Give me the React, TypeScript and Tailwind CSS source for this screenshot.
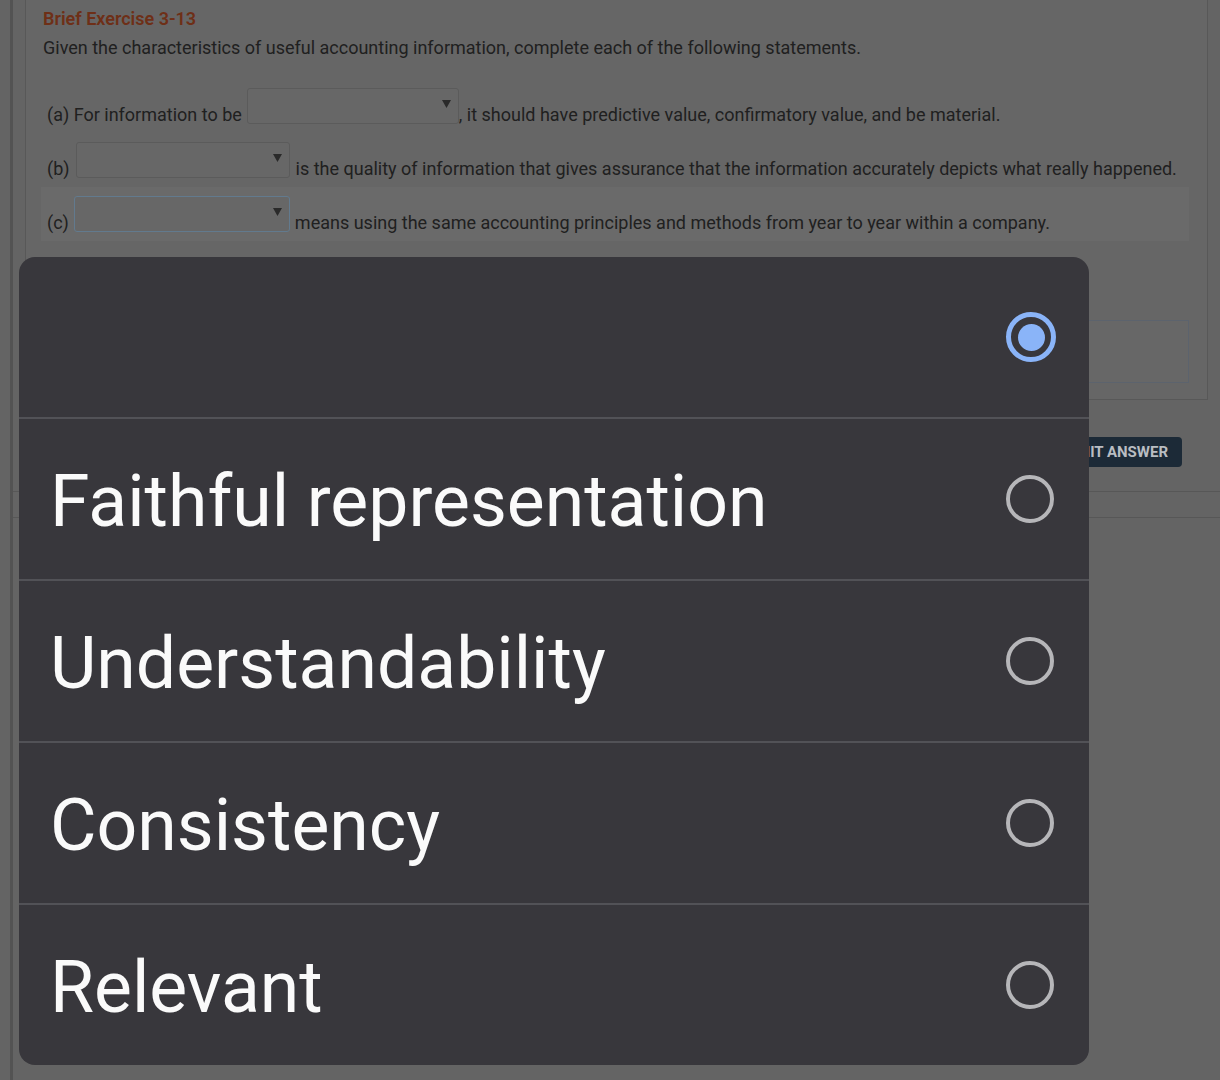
import React from "react";

const options = ["Faithful representation", "Understandability", "Consistency", "Relevant"];

function Dropdown({ className }: { className: string }) {
  return (
    <div className={`flex h-[36px] shrink-0 items-start justify-end rounded-[3px] border bg-[#676767] pr-[7px] pt-[11px] ${className}`}>
      <svg width="9" height="8" viewBox="0 0 9 8">
        <path d="M0 0 H9 L4.5 8 Z" fill="#2a2a2a" />
      </svg>
    </div>
  );
}

function Radio({ checked }: { checked?: boolean }) {
  if (checked) {
    return (
      <span className="flex h-[50px] w-[50px] shrink-0 items-center justify-center rounded-full border-[5px] border-[#8ab4f8]">
        <span className="h-[27px] w-[27px] rounded-full bg-[#8ab4f8]" />
      </span>
    );
  }
  return <span className="mr-[1px] h-[48px] w-[48px] shrink-0 rounded-full border-[4px] border-[#b6b6b9]" />;
}

export default function App() {
  return (
    <div className="relative h-[1080px] w-[1220px] overflow-hidden bg-[#646464] font-['Roboto',sans-serif] text-[#202020]">
      {/* page behind the overlay */}
      <div className="ml-[10px] h-[1080px] border-l-[3px] border-[#535353]">
        <div className="ml-[12px] w-[1183px] border-x border-b border-[#585858] bg-[#666666] pb-[16px] pl-[15px] pr-[18px] pt-[8px]">
          <h2 className="pl-[2px] text-[18px] font-semibold leading-[21px] text-[#6e2f17]">Brief Exercise 3-13</h2>
          <p className="mt-[9px] pl-[2px] text-[18px] leading-[20px]">
            Given the characteristics of useful accounting information, complete each of the following statements.
          </p>

          <div className="mt-[21px] text-[18px] leading-[18px]">
            <div className="flex items-end py-[9px] pl-[6px]">
              <span className="mr-[5px] whitespace-nowrap">(a) For information to be</span>
              <Dropdown className="w-[212px] border-[#5b5b5b]" />
              <span className="whitespace-nowrap">, it should have predictive value, confirmatory value, and be material.</span>
            </div>
            <div className="flex items-end py-[9px] pl-[6px]">
              <span className="mr-[6px]">(b)</span>
              <Dropdown className="w-[214px] border-[#5b5b5b]" />
              <span className="ml-[6px] whitespace-nowrap">
                is the quality of information that gives assurance that the information accurately depicts what really happened.
              </span>
            </div>
            <div className="flex items-end bg-[#6a6a6a] py-[9px] pl-[6px]">
              <span className="mr-[5px]">(c)</span>
              <Dropdown className="w-[216px] border-[#627a8e]" />
              <span className="ml-[5px] whitespace-nowrap">means using the same accounting principles and methods from year to year within a company.</span>
            </div>
          </div>

          <div className="mt-[79px] h-[63px] border border-[#5c636d] bg-[#676767]" />
        </div>

        <div className="flex justify-end pr-[38px] pt-[37px]">
          <button className="h-[30px] rounded-[4px] bg-[#1c2a37] px-[14px] text-[15px] font-bold text-[#b9bdc2]">
            SUBMIT ANSWER
          </button>
        </div>
        <div className="mt-[24px] h-[27px] border-y border-[#575757]" />
      </div>

      {/* select dialog */}
      <div className="absolute left-[19px] top-[257px] w-[1070px] overflow-hidden rounded-[16px] bg-[#38373c] text-white">
        <div className="flex h-[160px] items-center justify-end pr-[33px]">
          <Radio checked />
        </div>
        {options.map((opt) => (
          <div key={opt} className="border-t-2 border-[#525257]">
            <div className="flex h-[160px] items-center justify-between pl-[31px] pr-[34px]">
              <span className="pt-[5px] text-[71.5px] leading-[80px] text-[#fafafa]">{opt}</span>
              <Radio />
            </div>
          </div>
        ))}
      </div>
    </div>
  );
}
